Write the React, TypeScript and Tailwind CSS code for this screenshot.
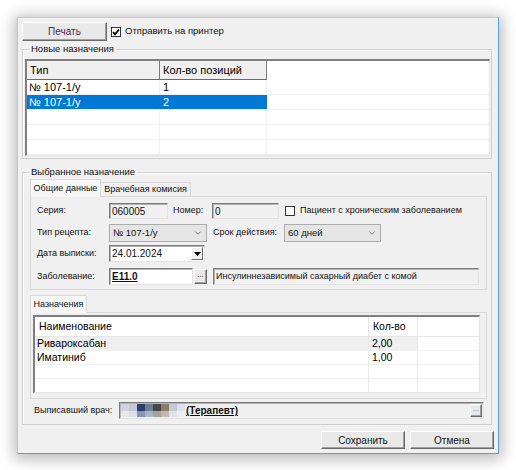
import type { ReactNode } from "react";
import { ChevronDown } from "lucide-react";

const sunken =
  "border border-t-[#7a7a7a] border-l-[#7a7a7a] border-r-[#e3e3e3] border-b-[#e3e3e3] shadow-[inset_1px_1px_0_#b4b4b4]";

function Btn({ children, className = "" }: { children: ReactNode; className?: string }) {
  return (
    <div
      className={`flex items-center justify-center bg-[#e9e9e9] border border-t-white border-l-white border-r-[#6a6a6a] border-b-[#6a6a6a] shadow-[inset_-1px_-1px_0_#a0a0a0] ${className}`}
    >
      {children}
    </div>
  );
}

function Check({ checked = false }: { checked?: boolean }) {
  return (
    <div className="w-[10px] h-[10px] border border-[#333] bg-white flex items-center justify-center shrink-0">
      {checked && (
        <svg width="8" height="8" viewBox="0 0 8 8">
          <path d="M1 4 L3 6.3 L7 1.5" fill="none" stroke="#000" strokeWidth="1.8" />
        </svg>
      )}
    </div>
  );
}

function GroupBox({ title, className = "", children }: { title: string; className?: string; children: ReactNode }) {
  return (
    <div className={`relative border border-[#d0d0d0] shadow-[inset_1px_1px_0_#fff] ${className}`}>
      <span className="absolute -top-[7px] left-[6px] bg-[#f0f0f0] px-[2px] text-[9.5px] leading-[12px] text-[#111]">
        {title}
      </span>
      {children}
    </div>
  );
}

function Combo({ value, className = "" }: { value: string; className?: string }) {
  return (
    <div
      className={`flex items-center justify-between bg-[#e5e5e5] border border-[#acacac] pl-[3px] pr-[3px] text-[9.5px] ${className}`}
    >
      <span>{value}</span>
      <ChevronDown size={10} strokeWidth={1.5} color="#444" />
    </div>
  );
}

function Label({ children, className = "" }: { children: ReactNode; className?: string }) {
  return <span className={`shrink-0 ${className}`}>{children}</span>;
}

const newRows = [
  { type: "№ 107-1/у", count: "1", selected: false },
  { type: "№ 107-1/у", count: "2", selected: true },
  { type: "", count: "", selected: false },
  { type: "", count: "", selected: false },
  { type: "", count: "", selected: false },
];

const drugRows = [
  { name: "Ривароксабан", qty: "2,00", current: true },
  { name: "Иматиниб", qty: "1,00", current: false },
  { name: "", qty: "", current: false },
  { name: "", qty: "", current: false },
];

const blurTop = ["#d0d3da", "#c3c8d4", "#2f3d6e", "#6b7d95", "#474747", "#8c7c6b", "#c6c8d3", "#dde1e8"];
const blurBottom = ["#e6e7ea", "#dcdfe6", "#8b93b0", "#aab5c3", "#a3a3a3", "#c2b9ae", "#e2e3ea", "#eceef2"];

export default function App() {
  return (
    <div className="w-[516px] min-h-[470px] bg-white pt-[17px] pl-[17px] font-['Liberation_Sans',Arial,sans-serif] text-[9px] text-[#111]">
      <div className="w-[482px] h-[437px] bg-[#f0f0f0] border border-t-[#c9c9c9] border-l-[#a9cbea] border-r-[#5d9dd8] border-b-[#5d9dd8] shadow-[0_2px_14px_3px_rgba(0,0,0,0.28)] pl-[4px] pt-[4px] flex flex-col">
        {/* top row */}
        <div className="flex items-center h-[19px]">
          <Btn className="w-[85px] h-[19px] text-[10px] text-[#4b2a5c]">Печать</Btn>
          <div className="ml-[4px]">
            <Check checked />
          </div>
          <span className="ml-[4px] text-[9.5px]">Отправить на принтер</span>
        </div>

        {/* new prescriptions */}
        <GroupBox title="Новые назначения" className="mt-[8px] w-[470px] h-[110px] pl-[2px] pt-[9px]">
          <div className="w-[465px] h-[97px] bg-white border-t-2 border-l-2 border-r border-b border-t-[#7f7f7f] border-l-[#7f7f7f] border-r-[#e3e3e3] border-b-[#e3e3e3] overflow-hidden text-[11px] text-black">
            <div className="flex h-[19px]">
              <div className="w-[133px] bg-[#f0f0f0] border-r border-b border-r-[#7a7a7a] border-b-[#6a6a6a] pl-[3px] flex items-center">
                Тип
              </div>
              <div className="w-[107px] bg-[#f0f0f0] border-r border-b border-r-[#7a7a7a] border-b-[#6a6a6a] pl-[3px] flex items-center">
                Кол-во позиций
              </div>
              <div className="flex-1" />
            </div>
            {newRows.map((r, i) => (
              <div key={i} className="flex h-[15px] border-b border-[#f0f0f0]">
                <div
                  className={`w-[133px] pl-[2px] flex items-center border-r ${
                    r.selected ? "bg-[#0078d7] text-white border-[#0078d7]" : "border-[#f0f0f0]"
                  }`}
                >
                  {r.type}
                </div>
                <div
                  className={`w-[107px] pl-[3px] flex items-center border-r ${
                    r.selected ? "bg-[#0078d7] text-white border-[#0078d7]" : "border-[#f0f0f0]"
                  }`}
                >
                  {r.count}
                </div>
                <div className="flex-1" />
              </div>
            ))}
          </div>
        </GroupBox>

        {/* selected prescription */}
        <GroupBox title="Выбранное назначение" className="mt-[13px] w-[470px] h-[253px] pl-[7px] pt-[6px]">
          <div className="flex items-end h-[17px]">
            <div className="relative z-10 -mb-px h-[18px] w-[71px] bg-[#f7f7f7] border border-b-0 border-[#d9d9d9] flex items-center justify-center text-[9px]">
              Общие данные
            </div>
            <div className="h-[14px] w-[90px] bg-[#f0f0f0] border border-b-0 border-l-0 border-[#d9d9d9] flex items-center justify-center text-[9px]">
              Врачебная комисия
            </div>
          </div>
          <div className="w-[457px] h-[94px] bg-[#f0f0f0] border border-[#d9d9d9] pl-[6px] pt-[6px] flex flex-col">
            <div className="flex items-center h-[16px]">
              <Label className="w-[72px]">Серия:</Label>
              <div className={`w-[59px] h-[16px] bg-[#f0f0f0] ${sunken} pl-[2px] flex items-center text-[10px]`}>060005</div>
              <Label className="ml-[5px] w-[39px]">Номер:</Label>
              <div className={`w-[67px] h-[16px] bg-[#f0f0f0] ${sunken} pl-[2px] flex items-center text-[10px]`}>0</div>
              <div className="ml-[6px]">
                <Check />
              </div>
              <Label className="ml-[5px]">Пациент с хроническим заболеванием</Label>
            </div>
            <div className="flex items-center h-[18px] mt-[5px]">
              <Label className="w-[72px]">Тип рецепта:</Label>
              <Combo value="№ 107-1/у" className="w-[98px] h-[18px]" />
              <Label className="ml-[6px] w-[71px]">Срок действия:</Label>
              <Combo value="60 дней" className="w-[97px] h-[18px]" />
            </div>
            <div className="flex items-center h-[17px] mt-[3px]">
              <Label className="w-[72px]">Дата выписки:</Label>
              <div className={`w-[96px] h-[17px] bg-white ${sunken} pl-[2px] flex items-center justify-between text-[10px]`}>
                <span>24.01.2024</span>
                <div className="w-[12px] h-[13px] mr-px bg-[#f0f0f0] border border-t-white border-l-white border-r-[#6a6a6a] border-b-[#6a6a6a] flex items-center justify-center">
                  <svg width="7" height="4" viewBox="0 0 7 4">
                    <path d="M0 0 H7 L3.5 4 Z" fill="#000" />
                  </svg>
                </div>
              </div>
            </div>
            <div className="flex items-center h-[17px] mt-[6px]">
              <Label className="w-[72px]">Заболевание:</Label>
              <div className={`w-[84px] h-[17px] bg-white ${sunken} pl-[2px] flex items-center text-[10px] font-bold underline`}>
                E11.0
              </div>
              <Btn className="ml-px w-[13px] h-[15px] text-[8px] items-end pb-[2px]">...</Btn>
              <div className={`ml-[6px] w-[266px] h-[17px] bg-[#f0f0f0] ${sunken} pl-[2px] flex items-center`}>
                Инсулиннезависимый сахарный диабет с комой
              </div>
            </div>
          </div>

          <div className="flex items-end h-[17px] mt-[5px]">
            <div className="relative z-10 -mb-px h-[18px] w-[57px] bg-[#f7f7f7] border border-b-0 border-[#d9d9d9] flex items-center justify-center text-[9px]">
              Назначения
            </div>
          </div>
          <div className="w-[457px] h-[87px] bg-[#f0f0f0] border border-[#d9d9d9] pl-[2px] pt-[2px]">
            <div className="w-[447px] h-[78px] bg-white border-t-2 border-l-2 border-r border-b border-t-[#7f7f7f] border-l-[#7f7f7f] border-r-[#e3e3e3] border-b-[#e3e3e3] overflow-hidden text-[10.5px] text-black">
              <div className="flex h-[20px] border-b border-[#e6e6e6]">
                <div className="w-[334px] pl-[4px] flex items-center border-r border-[#e6e6e6]">Наименование</div>
                <div className="w-[49px] pl-[4px] flex items-center border-r border-[#e6e6e6]">Кол-во</div>
                <div className="flex-1" />
              </div>
              {drugRows.map((r, i) => (
                <div key={i} className="flex h-[14px] border-b border-[#f0f0f0]">
                  <div className={`w-[334px] pl-[2px] flex items-center border-r border-[#e8e8e8] ${r.current ? "bg-[#efefef]" : ""}`}>
                    {r.name}
                  </div>
                  <div className={`w-[49px] pl-[3px] flex items-center border-r border-[#e8e8e8] ${r.current ? "bg-[#efefef]" : ""}`}>
                    {r.qty}
                  </div>
                  <div className="flex-1" />
                </div>
              ))}
            </div>
          </div>

          <div className="flex items-center h-[17px] mt-[3px] ml-[4px]">
            <Label className="w-[85px]">Выписавший врач:</Label>
            <div className={`w-[365px] h-[17px] bg-[#f0f0f0] ${sunken} pl-[1px] flex items-center justify-between`}>
              <div className="flex items-center">
                <div className="flex flex-col">
                  <div className="flex">
                    {blurTop.map((c, i) => (
                      <div key={i} className="w-[8px] h-[7px]" style={{ backgroundColor: c }} />
                    ))}
                  </div>
                  <div className="flex">
                    {blurBottom.map((c, i) => (
                      <div key={i} className="w-[8px] h-[6px]" style={{ backgroundColor: c }} />
                    ))}
                  </div>
                </div>
                <span className="ml-[1px] text-[10px] font-bold underline">(Терапевт)</span>
              </div>
              <Btn className="mr-px w-[12px] h-[13px] text-[8px] text-[#888] items-end pb-px">...</Btn>
            </div>
          </div>
        </GroupBox>

        {/* bottom buttons */}
        <div className="mt-[6px] w-[472px] flex justify-end gap-[5px]">
          <Btn className="w-[84px] h-[18px] text-[10px]">Сохранить</Btn>
          <Btn className="w-[84px] h-[18px] text-[10px]">Отмена</Btn>
        </div>
      </div>
    </div>
  );
}
